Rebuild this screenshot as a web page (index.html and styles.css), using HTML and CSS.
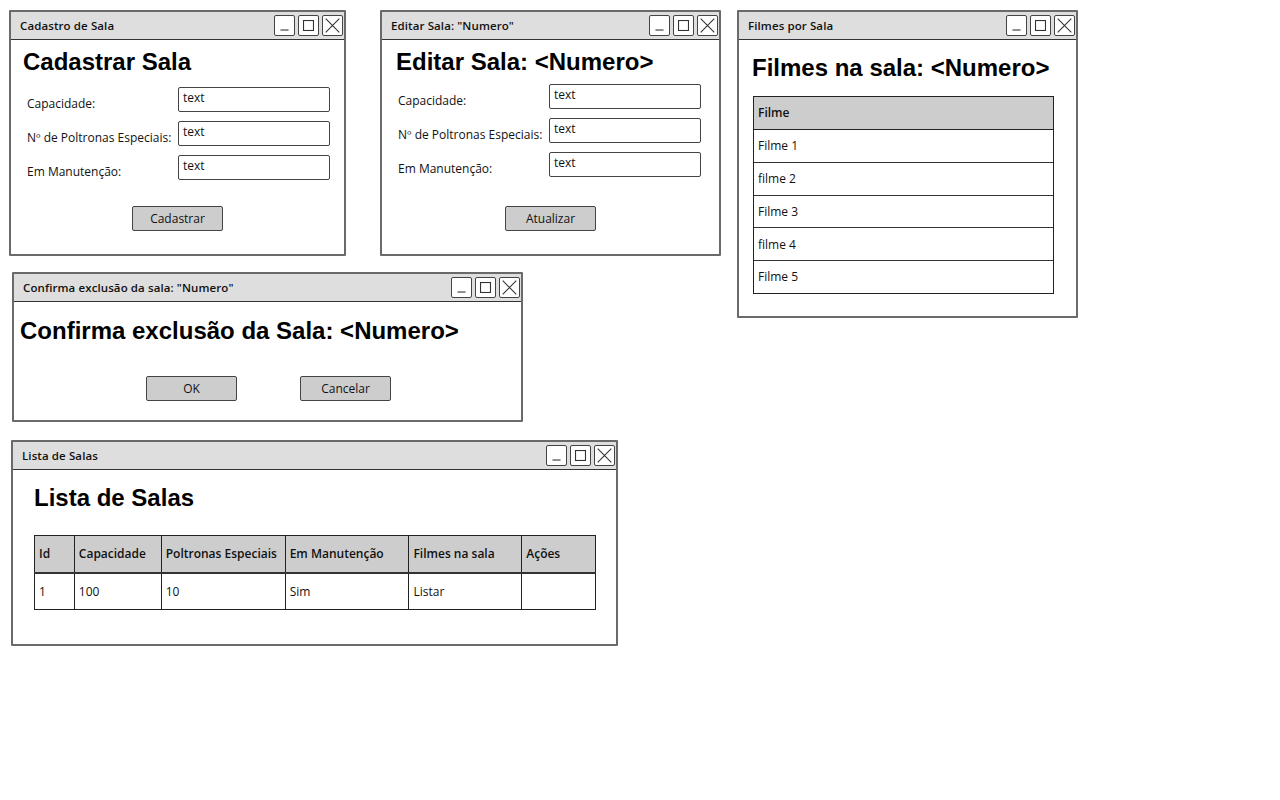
FILE: index.html
```html
<!DOCTYPE html>
<html lang="pt">
<head>
<meta charset="utf-8">
<title>Salas - Mockups</title>
<link rel="stylesheet" href="styles.css">
</head>
<body>
<div class="canvas">

  <section class="win win-cadastro">
    <header class="titlebar">
      <span class="wtitle">Cadastro de Sala</span>
      <div class="controls">
        <span class="ctl"><svg viewBox="0 0 21 21"><path d="M6 15.5h9"/></svg></span>
        <span class="ctl"><svg viewBox="0 0 21 21"><rect x="5" y="5" width="11" height="11"/></svg></span>
        <span class="ctl"><svg viewBox="0 0 21 21"><path d="M3 3l15 15M18 3L3 18"/></svg></span>
      </div>
    </header>
    <div class="wbody form-body">
      <h1 class="heading">Cadastrar Sala</h1>
      <div class="form">
        <label class="lbl">Capacidade:</label><div class="input">text</div>
        <label class="lbl">Nº de Poltronas Especiais:</label><div class="input">text</div>
        <label class="lbl">Em Manutenção:</label><div class="input">text</div>
      </div>
      <div class="actions"><span class="btn">Cadastrar</span></div>
    </div>
  </section>

  <section class="win win-editar">
    <header class="titlebar">
      <span class="wtitle">Editar Sala: "Numero"</span>
      <div class="controls">
        <span class="ctl"><svg viewBox="0 0 21 21"><path d="M6 15.5h9"/></svg></span>
        <span class="ctl"><svg viewBox="0 0 21 21"><rect x="5" y="5" width="11" height="11"/></svg></span>
        <span class="ctl"><svg viewBox="0 0 21 21"><path d="M3 3l15 15M18 3L3 18"/></svg></span>
      </div>
    </header>
    <div class="wbody form-body edit-body">
      <h1 class="heading">Editar Sala: &lt;Numero&gt;</h1>
      <div class="form">
        <label class="lbl">Capacidade:</label><div class="input">text</div>
        <label class="lbl">Nº de Poltronas Especiais:</label><div class="input">text</div>
        <label class="lbl">Em Manutenção:</label><div class="input">text</div>
      </div>
      <div class="actions edit-actions"><span class="btn">Atualizar</span></div>
    </div>
  </section>

  <section class="win win-filmes">
    <header class="titlebar">
      <span class="wtitle">Filmes por Sala</span>
      <div class="controls">
        <span class="ctl"><svg viewBox="0 0 21 21"><path d="M6 15.5h9"/></svg></span>
        <span class="ctl"><svg viewBox="0 0 21 21"><rect x="5" y="5" width="11" height="11"/></svg></span>
        <span class="ctl"><svg viewBox="0 0 21 21"><path d="M3 3l15 15M18 3L3 18"/></svg></span>
      </div>
    </header>
    <div class="wbody filmes-body">
      <h1 class="heading">Filmes na sala: &lt;Numero&gt;</h1>
      <div class="list">
        <div class="list-head">Filme</div>
        <div class="list-row">Filme 1</div>
        <div class="list-row">filme 2</div>
        <div class="list-row">Filme 3</div>
        <div class="list-row">filme 4</div>
        <div class="list-row">Filme 5</div>
      </div>
    </div>
  </section>

  <section class="win win-confirma">
    <header class="titlebar">
      <span class="wtitle">Confirma exclusão da sala: "Numero"</span>
      <div class="controls">
        <span class="ctl"><svg viewBox="0 0 21 21"><path d="M6 15.5h9"/></svg></span>
        <span class="ctl"><svg viewBox="0 0 21 21"><rect x="5" y="5" width="11" height="11"/></svg></span>
        <span class="ctl"><svg viewBox="0 0 21 21"><path d="M3 3l15 15M18 3L3 18"/></svg></span>
      </div>
    </header>
    <div class="wbody confirma-body">
      <h1 class="heading">Confirma exclusão da Sala: &lt;Numero&gt;</h1>
      <div class="actions two"><span class="btn">OK</span><span class="btn">Cancelar</span></div>
    </div>
  </section>

  <section class="win win-lista">
    <header class="titlebar">
      <span class="wtitle">Lista de Salas</span>
      <div class="controls">
        <span class="ctl"><svg viewBox="0 0 21 21"><path d="M6 15.5h9"/></svg></span>
        <span class="ctl"><svg viewBox="0 0 21 21"><rect x="5" y="5" width="11" height="11"/></svg></span>
        <span class="ctl"><svg viewBox="0 0 21 21"><path d="M3 3l15 15M18 3L3 18"/></svg></span>
      </div>
    </header>
    <div class="wbody lista-body">
      <h1 class="heading">Lista de Salas</h1>
      <table class="grid">
        <thead>
          <tr><th class="c1">Id</th><th class="c2">Capacidade</th><th class="c3">Poltronas Especiais</th><th class="c4">Em Manutenção</th><th class="c5">Filmes na sala</th><th class="c6">Ações</th></tr>
        </thead>
        <tbody>
          <tr><td>1</td><td>100</td><td>10</td><td>Sim</td><td>Listar</td><td></td></tr>
        </tbody>
      </table>
    </div>
  </section>

</div>
</body>
</html>
```

FILE: styles.css
```css
* { box-sizing: border-box; }

html, body {
  margin: 0;
  padding: 0;
  background: #ffffff;
}

body {
  font-family: "Open Sans", "DejaVu Sans", sans-serif;
  font-size: 12px;
  color: #111;
}

.canvas {
  position: relative;
  width: 1280px;
  height: 800px;
}

.win {
  position: absolute;
  display: flex;
  flex-direction: column;
  background: #fff;
  border: 2px solid #6a6a6a;
  border-radius: 1px;
}

.win-cadastro { left: 9px; top: 10px; width: 337px; height: 246px; }
.win-editar   { left: 380px; top: 10px; width: 341px; height: 246px; }
.win-filmes   { left: 737px; top: 10px; width: 341px; height: 308px; }
.win-confirma { left: 12px; top: 272px; width: 511px; height: 150px; }
.win-lista    { left: 11px; top: 440px; width: 607px; height: 206px; }

.titlebar {
  display: flex;
  align-items: center;
  justify-content: space-between;
  height: 28px;
  flex: none;
  background: #dedede;
  border-bottom: 1px solid #333;
  padding: 0 1px 0 9px;
}

.wtitle {
  font-size: 11.5px;
  font-weight: 600;
  color: #111;
  letter-spacing: 0.1px;
}

.controls {
  display: flex;
  gap: 3px;
}

.ctl {
  width: 21px;
  height: 21px;
  border: 1.5px solid #444;
  border-radius: 2px;
  background: #fff;
  display: flex;
}

.ctl svg {
  width: 100%;
  height: 100%;
  fill: none;
  stroke: #333;
  stroke-width: 1.2;
}

.wbody {
  flex: 1;
  display: flex;
  flex-direction: column;
}

.heading {
  margin: 0;
  font-family: "Liberation Sans", Arial, sans-serif;
  font-weight: 700;
  font-size: 24px;
  line-height: 28px;
  color: #000;
}

/* Form windows */
.form-body {
  padding: 8px 0 0 12px;
}

.edit-body {
  padding-left: 14px;
}

.form {
  display: grid;
  grid-template-columns: 151px 152px;
  row-gap: 9px;
  margin-top: 11px;
  padding-left: 4px;
}

.edit-body .form {
  margin-top: 8px;
  padding-left: 2px;
}

.lbl {
  align-self: end;
  font-size: 12px;
  line-height: 14px;
  padding-bottom: 1px;
  white-space: nowrap;
}

.input {
  height: 25px;
  border: 1.5px solid #444;
  border-radius: 2px;
  padding: 0 0 0 4px;
  font-size: 12px;
  line-height: 20px;
  background: #fff;
}

.actions {
  display: flex;
  justify-content: center;
  margin-top: 26px;
  padding-right: 12px;
}

.edit-actions {
  margin-top: 29px;
  padding-right: 14px;
}

.btn {
  width: 91px;
  height: 25px;
  background: #cdcdcd;
  border: 1.5px solid #444;
  border-radius: 2px;
  display: flex;
  align-items: center;
  justify-content: center;
  font-size: 12px;
}

/* Filmes */
.filmes-body {
  padding: 14px 0 0 13px;
}

.list {
  margin-top: 14px;
  margin-left: 1px;
  width: 301px;
  border: 1px solid #222;
}

.list-head,
.list-row {
  height: 32.6px;
  display: flex;
  align-items: center;
  padding-left: 4px;
  font-size: 12px;
}

.list-head {
  background: #cdcdcd;
  font-weight: 600;
  border-bottom: 1px solid #222;
}

.list-row + .list-row {
  border-top: 1px solid #333;
}

/* Confirma */
.confirma-body {
  padding: 15px 0 0 6px;
}

.actions.two {
  gap: 63px;
  margin-top: 31px;
  padding-right: 4px;
}

/* Lista */
.lista-body {
  padding: 14px 0 0 21px;
}

.grid {
  margin-top: 23px;
  border-collapse: collapse;
  width: 562px;
  font-size: 12px;
}

.grid th,
.grid td {
  border: 1px solid #222;
  text-align: left;
  padding: 0 0 0 4px;
  white-space: nowrap;
}

.grid th {
  background: #cdcdcd;
  font-weight: 600;
  height: 37px;
  border-bottom: 2px solid #333;
}

.grid td {
  height: 37px;
}

.c1 { width: 40px; }
.c2 { width: 87px; }
.c3 { width: 124px; }
.c4 { width: 124px; }
.c5 { width: 113px; }
.c6 { width: 74px; }
```
